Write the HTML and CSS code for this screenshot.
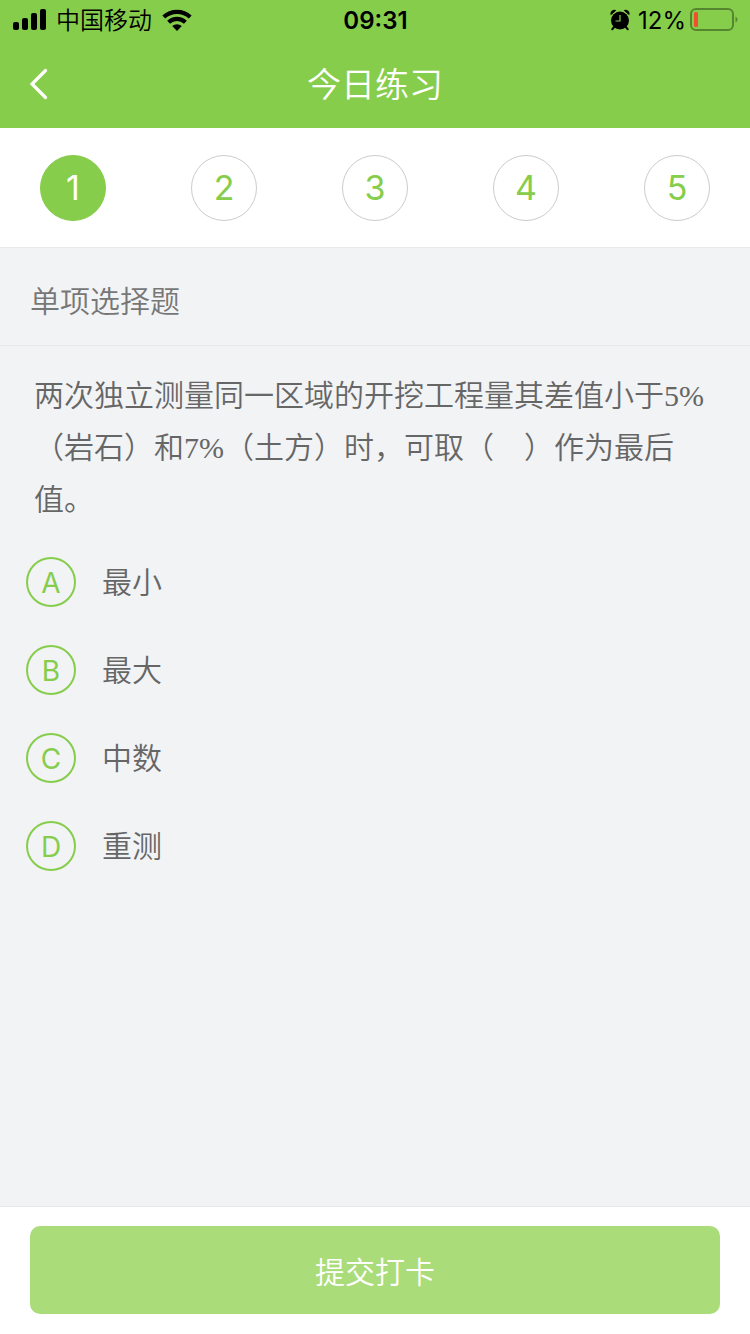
FILE: index.html
```html
<!DOCTYPE html>
<html lang="zh-CN">
<head>
<meta charset="utf-8">
<meta name="viewport" content="width=device-width">
<title>今日练习</title>
<link rel="stylesheet" href="styles.css">
</head>
<body>
<header class="top">
  <div class="status">
    <div class="status-left">
      <svg class="icon" width="33" height="22" viewBox="0 0 33 22" aria-hidden="true">
        <rect x="0" y="13" width="6" height="8" rx="2"/>
        <rect x="9" y="9" width="6" height="12" rx="2"/>
        <rect x="18" y="4" width="6" height="17" rx="2"/>
        <rect x="27" y="0" width="6" height="21" rx="2"/>
      </svg>
      <span class="carrier">中国移动</span>
      <svg class="icon" width="30" height="22" viewBox="0 0 30 22" aria-hidden="true">
        <g fill="none" stroke="#000" stroke-width="4.200">
          <path d="M1.800 8A19.500 19.500 0 0 1 28.200 8"/>
          <path d="M6.600 13.200A12.300 12.300 0 0 1 23.400 13.200"/>
        </g>
        <path d="M15 22l-4.800-4.900a7 7 0 0 1 9.600 0z"/>
      </svg>
    </div>
    <time class="clock">09:31</time>
    <div class="status-right">
      <svg class="icon" width="20" height="22" viewBox="0 0 20 22" aria-hidden="true">
        <circle cx="10" cy="11.500" r="9"/>
        <path d="M.8 6.200A4 4 0 0 1 6.400 1.200zM19.200 6.200A4 4 0 0 0 13.600 1.200z"/>
        <path d="M4.500 17.500l-2.300 2.800M15.500 17.500l2.300 2.800" stroke="#000" stroke-width="2" stroke-linecap="round"/>
        <path d="M10 6v6H5.500" fill="none" stroke="#86cd4b" stroke-width="1.200"/>
      </svg>
      <span class="percent">12%</span>
      <svg class="icon" width="48" height="24" viewBox="0 0 48 24" aria-hidden="true">
        <rect x="1" y="1" width="42" height="21" rx="5" fill="none" stroke="#568530" stroke-width="2"/>
        <rect x="4" y="4" width="4" height="15" rx="1.500" fill="#f1502f"/>
        <path d="M45.500 8.500q2 1 2 3t-2 3z" fill="#568530"/>
      </svg>
    </div>
  </div>
  <nav class="nav">
    <button class="back" type="button" aria-label="返回">
      <svg width="20" height="32" viewBox="0 0 20 32" aria-hidden="true"><path d="M17.500 2.500L4 16l13.500 13.500" fill="none" stroke="#fff" stroke-width="3.200" stroke-linecap="round"/></svg>
    </button>
    <h1 class="title">今日练习</h1>
  </nav>
</header>
<div class="steps">
  <button class="step current" type="button" aria-current="step">1</button>
  <button class="step" type="button">2</button>
  <button class="step" type="button">3</button>
  <button class="step" type="button">4</button>
  <button class="step" type="button">5</button>
</div>
<main class="main">
  <h2 class="kind">单项选择题</h2>
  <p class="question" id="question">两次独立测量同一区域的开挖工程量其差值小于5%（岩石）和7%（土方）时，可取（　）作为最后值。</p>
  <div class="options" role="radiogroup" aria-labelledby="question">
    <label class="option"><span class="mark"><input class="radio" type="radio" name="answer" value="A"><span class="letter">A</span></span><span>最小</span></label>
    <label class="option"><span class="mark"><input class="radio" type="radio" name="answer" value="B"><span class="letter">B</span></span><span>最大</span></label>
    <label class="option"><span class="mark"><input class="radio" type="radio" name="answer" value="C"><span class="letter">C</span></span><span>中数</span></label>
    <label class="option"><span class="mark"><input class="radio" type="radio" name="answer" value="D"><span class="letter">D</span></span><span>重测</span></label>
  </div>
</main>
<footer class="footer">
  <button class="submit" type="button">提交打卡</button>
</footer>
</body>
</html>
```
FILE: styles.css
```css
* {
  box-sizing: border-box;
}

body {
  margin: 0;
  min-height: 100vh;
  display: flex;
  flex-direction: column;
  background: #f2f3f5;
  color: #666;
  font-family: Inter, "Noto Sans CJK SC", sans-serif;
  font-weight: 350;
}

button {
  margin: 0;
  padding: 0;
  border: 0;
  background: none;
  font: inherit;
  cursor: pointer;
}

.top {
  background: #86cd4b;
}

.status {
  display: grid;
  grid-template-columns: 1fr auto 1fr;
  align-items: center;
  height: 40px;
  padding: 0 12px 0 13px;
  color: #000;
  font-size: 24px;
  line-height: 36px;
}

.status-left,
.status-right {
  display: flex;
  align-items: center;
}

.status-left {
  gap: 10px;
}

.status-right {
  justify-content: flex-end;
  gap: 4px;
}

.icon {
  display: block;
  flex: none;
}

.carrier,
.clock,
.percent {
  padding-top: 2px;
}

.percent {
  margin-left: 4px;
  font-weight: 400;
}

.clock {
  font-weight: 600;
}

.nav {
  display: grid;
  grid-template-columns: 80px 1fr 80px;
  align-items: center;
  height: 88px;
}

.back {
  height: 88px;
  padding-left: 28px;
  text-align: left;
}

.back svg {
  display: block;
}

.title {
  margin: 0;
  padding-top: 2px;
  color: #fff;
  font-size: 34px;
  font-weight: 350;
  line-height: 48px;
  text-align: center;
}

.steps {
  display: flex;
  justify-content: space-between;
  align-items: center;
  height: 120px;
  padding: 0 40px;
  background: #fff;
  border-bottom: 1px solid #e8e8e8;
}

.step {
  width: 66px;
  height: 66px;
  border: 1px solid #ccc;
  border-radius: 50%;
  color: #86cd4b;
  font-size: 34px;
  font-weight: 400;
  line-height: 64px;
}

.step.current {
  border-color: #86cd4b;
  background: #86cd4b;
  color: #fff;
}

.main {
  flex: 1;
}

.kind {
  margin: 0;
  padding: 31px 30px 22px;
  border-bottom: 1px solid #e8e9eb;
  color: #777;
  font-size: 30px;
  font-weight: 350;
  line-height: 44px;
}

.question {
  margin: 0;
  padding: 24px 34px 12px;
  font-family: "Liberation Serif", "Noto Sans CJK SC", serif;
  font-size: 30px;
  line-height: 52px;
}

.option {
  display: flex;
  align-items: center;
  gap: 26px;
  height: 88px;
  padding: 0 26px;
  font-size: 30px;
  line-height: 44px;
  cursor: pointer;
}

.mark {
  display: grid;
  place-items: center;
}

.radio,
.letter {
  grid-area: 1 / 1;
}

.radio {
  width: 50px;
  height: 50px;
  margin: 0;
  appearance: none;
  border: 2px solid #86cd4b;
  border-radius: 50%;
}

.letter {
  padding-top: 2px;
  color: #86cd4b;
  font-size: 28px;
  font-weight: 400;
}

.footer {
  padding: 19px 30px 20px;
  background: #fff;
  border-top: 1px solid #e8e8e8;
}

.submit {
  width: 100%;
  height: 88px;
  border-radius: 10px;
  background: #aadc7a;
  color: #fff;
  font-size: 30px;
}
```
